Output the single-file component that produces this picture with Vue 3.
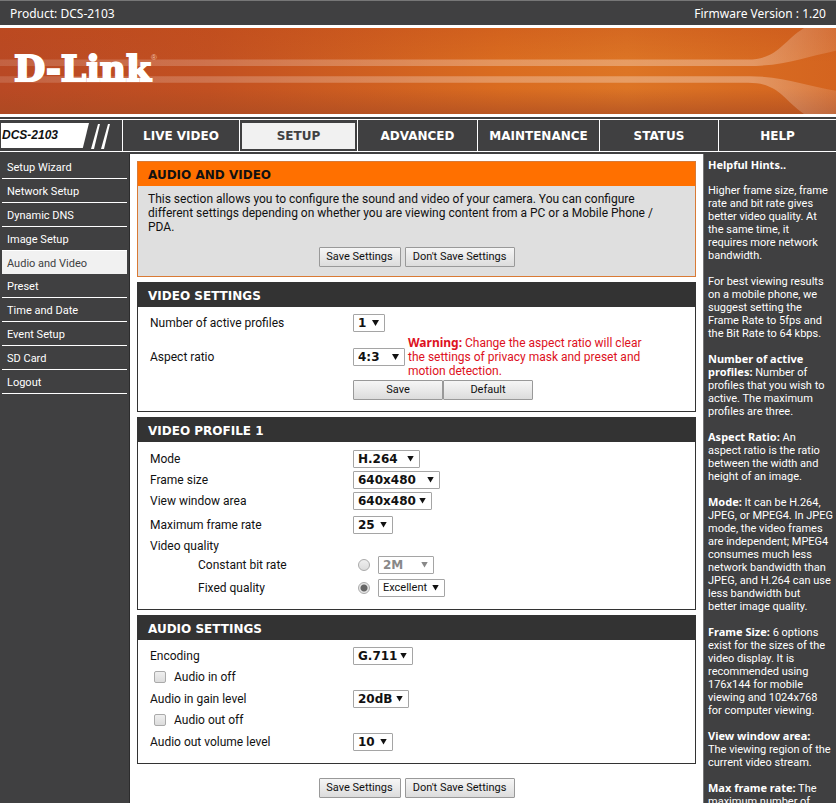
<template>
  <div class="page">
    <header>
      <div class="topbar">
        <span>Product: DCS-2103</span>
        <span>Firmware Version : 1.20</span>
      </div>
      <div class="banner">
        <svg class="banner-art" viewBox="0 0 836 86" preserveAspectRatio="none" aria-hidden="true">
          <defs>
            <linearGradient id="base" x1="0" x2="1" y1="0" y2="0">
              <stop offset="0" stop-color="#b94924" />
              <stop offset="0.25" stop-color="#c25021" />
              <stop offset="0.6" stop-color="#da6c20" />
              <stop offset="0.75" stop-color="#dd7525" />
              <stop offset="1" stop-color="#d4641f" />
            </linearGradient>
            <linearGradient id="shade" x1="0" x2="0" y1="0" y2="1">
              <stop offset="0" stop-color="#c04a18" stop-opacity="0.3" />
              <stop offset="0.4" stop-color="#c04a18" stop-opacity="0" />
              <stop offset="0.7" stop-color="#a84a22" stop-opacity="0" />
              <stop offset="1" stop-color="#a84a22" stop-opacity="0.65" />
            </linearGradient>
            <linearGradient id="beam" gradientUnits="userSpaceOnUse" x1="0" x2="836" y1="0" y2="0">
              <stop offset="0" stop-color="#fff" stop-opacity="0.14" />
              <stop offset="0.6" stop-color="#fff" stop-opacity="0.28" />
              <stop offset="0.9" stop-color="#fff" stop-opacity="0.3" />
              <stop offset="1" stop-color="#fff" stop-opacity="0.12" />
            </linearGradient>
          </defs>
          <rect width="836" height="86" fill="url(#base)" />
          <rect width="836" height="86" fill="url(#shade)" />
          <path d="M0 31.5H748C778 31 782 14 804 0H836V22.7C805 29 785 38 748 38H0Z" fill="url(#beam)" />
          <path d="M0 48.3H748C785 48 805 58 836 62.7V86H804C782 70 778 54.8 748 54.8H0Z" fill="url(#beam)" />
        </svg>
        <div class="logo">D-Link<sup>®</sup></div>
      </div>
      <nav class="mainnav">
        <div class="model">
          <span class="model-name">DCS-2103</span>
          <svg width="20" height="26" viewBox="0 0 20 26" aria-hidden="true">
            <path d="M1 26L8 1H10L4 26ZM11 26L18 1H20L14 26Z" fill="#fff" />
          </svg>
        </div>
        <a
          v-for="tab in tabs"
          :key="tab"
          href="#"
          class="tab"
          :class="{ active: tab === 'SETUP' }"
        ><span>{{ tab }}</span></a>
      </nav>
    </header>

    <div class="body">
      <nav class="sidebar">
        <a
          v-for="item in menu"
          :key="item"
          href="#"
          :class="{ active: item === 'Audio and Video' }"
        >{{ item }}</a>
      </nav>

      <main>
        <section class="box intro">
          <h1>AUDIO AND VIDEO</h1>
          <p>
            This section allows you to configure the sound and video of your camera. You can configure
            different settings depending on whether you are viewing content from a PC or a Mobile Phone / PDA.
          </p>
          <div class="actions">
            <button type="button">Save Settings</button>
            <button type="button" class="wide">Don't Save Settings</button>
          </div>
        </section>

        <section class="box">
          <h2>VIDEO SETTINGS</h2>
          <div class="row tall">
            <label for="profiles">Number of active profiles</label>
            <span class="select w32"><select id="profiles"><option>1</option></select></span>
          </div>
          <div class="row aspect">
            <label for="aspect">Aspect ratio</label>
            <span class="select w52"><select id="aspect"><option>4:3</option></select></span>
            <p class="warning">
              <b>Warning:</b> Change the aspect ratio will clear the settings of privacy mask and preset and motion detection.
            </p>
          </div>
          <div class="row pair">
            <button type="button">Save</button>
            <button type="button">Default</button>
          </div>
        </section>

        <section class="box">
          <h2>VIDEO PROFILE 1</h2>
          <div class="profile">
            <div class="row">
              <label for="mode">Mode</label>
              <span class="select w67"><select id="mode"><option>H.264</option></select></span>
            </div>
            <div class="row">
              <label for="frame-size">Frame size</label>
              <span class="select w87"><select id="frame-size"><option>640x480</option></select></span>
            </div>
            <div class="row">
              <label for="view-area">View window area</label>
              <span class="select w79"><select id="view-area"><option>640x480</option></select></span>
            </div>
            <div class="row rate">
              <label for="rate">Maximum frame rate</label>
              <span class="select w40"><select id="rate"><option>25</option></select></span>
            </div>
            <div class="row short">
              <span>Video quality</span>
            </div>
            <div class="row quality">
              <label for="cbr">Constant bit rate</label>
              <input id="cbr" v-model="quality" type="radio" name="quality" value="cbr">
              <span class="select w56 off">
                <select aria-label="Bit rate" disabled><option>2M</option></select>
              </span>
            </div>
            <div class="row quality">
              <label for="fixed">Fixed quality</label>
              <input id="fixed" v-model="quality" type="radio" name="quality" value="fixed">
              <span class="select w67 plain">
                <select aria-label="Quality"><option>Excellent</option></select>
              </span>
            </div>
          </div>
        </section>

        <section class="box">
          <h2>AUDIO SETTINGS</h2>
          <div class="audio">
            <div class="row">
              <label for="encoding">Encoding</label>
              <span class="select w60"><select id="encoding"><option>G.711</option></select></span>
            </div>
            <div class="row check">
              <input id="in-off" type="checkbox">
              <label for="in-off">Audio in off</label>
            </div>
            <div class="row">
              <label for="gain">Audio in gain level</label>
              <span class="select w56"><select id="gain"><option>20dB</option></select></span>
            </div>
            <div class="row check">
              <input id="out-off" type="checkbox">
              <label for="out-off">Audio out off</label>
            </div>
            <div class="row">
              <label for="volume">Audio out volume level</label>
              <span class="select w40"><select id="volume"><option>10</option></select></span>
            </div>
          </div>
        </section>

        <div class="actions bottom">
          <button type="button">Save Settings</button>
          <button type="button" class="wide">Don't Save Settings</button>
        </div>
      </main>

      <aside>
        <h3>Helpful Hints..</h3>
        <p v-for="hint in hints" :key="hint.text"><b v-if="hint.title">{{ hint.title }}</b>{{ hint.text }}</p>
      </aside>
    </div>
  </div>
</template>

<script setup>
import { ref } from 'vue'

const quality = ref('fixed')

const tabs = ['LIVE VIDEO', 'SETUP', 'ADVANCED', 'MAINTENANCE', 'STATUS', 'HELP']

const menu = [
  'Setup Wizard',
  'Network Setup',
  'Dynamic DNS',
  'Image Setup',
  'Audio and Video',
  'Preset',
  'Time and Date',
  'Event Setup',
  'SD Card',
  'Logout',
]

// line breaks are kept by white-space: pre-line
const hints = [
  { text: 'Higher frame size, frame\nrate and bit rate gives\nbetter video quality. At\nthe same time, it\nrequires more network\nbandwidth.' },
  { text: 'For best viewing results\non a mobile phone, we\nsuggest setting the\nFrame Rate to 5fps and\nthe Bit Rate to 64 kbps.' },
  { title: 'Number of active\nprofiles:', text: ' Number of\nprofiles that you wish to\nactive. The maximum\nprofiles are three.' },
  { title: 'Aspect Ratio:', text: ' An\naspect ratio is the ratio\nbetween the width and\nheight of an image.' },
  { title: 'Mode:', text: ' It can be H.264,\nJPEG, or MPEG4. In JPEG\nmode, the video frames\nare independent; MPEG4\nconsumes much less\nnetwork bandwidth than\nJPEG, and H.264 can use\nless bandwidth but\nbetter image quality.' },
  { title: 'Frame Size:', text: ' 6 options\nexist for the sizes of the\nvideo display. It is\nrecommended using\n176x144 for mobile\nviewing and 1024x768\nfor computer viewing.' },
  { title: 'View window area:', text: '\nThe viewing region of the\ncurrent video stream.' },
  { title: 'Max frame rate:', text: ' The\nmaximum number of' },
]
</script>

<style>
body {
  margin: 0;
  background: #fff;
}
</style>

<style scoped>
* {
  box-sizing: border-box;
}

.page {
  display: flex;
  flex-direction: column;
  height: 100vh;
  overflow: hidden;
  font-family: Tahoma, Roboto, sans-serif;
  font-size: 12px;
  line-height: 14px;
  color: #111;
}

.topbar {
  display: flex;
  align-items: center;
  justify-content: space-between;
  height: 25px;
  padding: 2px 10px 0;
  border-top: 1px solid #777;
  background: #404041;
  font-family: Tahoma, "Noto Sans", sans-serif;
  color: #fff;
}

.banner {
  position: relative;
  height: 86px;
  margin: 3px 0;
}

.banner-art {
  display: block;
  width: 100%;
  height: 100%;
}

.logo {
  position: absolute;
  top: 20px;
  left: 14px;
  font-family: "DejaVu Serif", serif;
  font-size: 36px;
  font-weight: bold;
  line-height: 40px;
  color: #fff;
  -webkit-text-stroke: 2px #fff;
}

.logo sup {
  position: absolute;
  top: 0;
  left: 100%;
  font-family: "Liberation Sans", sans-serif;
  font-size: 8px;
  font-weight: normal;
  line-height: 20px;
  color: #f0c0a8;
  -webkit-text-stroke: 0;
}

.mainnav {
  display: grid;
  grid-template-columns: 122fr 117fr 118fr 120fr 122fr 119fr 118fr;
  height: 37px;
  border-top: 2px solid #404041;
  border-bottom: 2px solid #404041;
  background: #404041;
  box-shadow: inset 0 1px #fff, inset 0 -1px #fff;
}

.model {
  display: flex;
  align-items: center;
  gap: 1px;
  padding-left: 1px;
}

.model-name {
  width: 88px;
  height: 25px;
  padding-left: 1px;
  background: #fff;
  clip-path: polygon(0 0, 100% 0, 93% 100%, 0 100%);
  font-family: "Liberation Sans", Arial, sans-serif;
  font-style: italic;
  font-weight: bold;
  line-height: 24px;
  color: #111;
}

.tab {
  display: flex;
  padding: 4px 2px 3px;
  border-left: 1px solid #fff;
  font-family: "DejaVu Sans", Verdana, sans-serif;
  font-weight: bold;
  color: #fff;
  text-decoration: none;
}

.tab span {
  flex: 1;
  line-height: 26px;
  text-align: center;
}

.tab.active span {
  background: #f1f1f1;
  color: #404041;
}

.body {
  display: grid;
  grid-template-columns: 130px 1fr 133px;
  flex: 1;
  min-height: 0;
}

.sidebar {
  padding: 1px 2px 0;
  border-right: 1px solid #2c2c2d;
  background: #404041;
}

.sidebar a {
  display: block;
  height: 24px;
  padding-left: 5px;
  border-bottom: 1px solid #fff;
  font-size: 11px;
  line-height: 26px;
  color: #fff;
  text-decoration: none;
}

.sidebar a.active {
  height: 23px;
  border-bottom: 0;
  background: #f1f1f1;
  color: #404041;
}

main {
  padding: 7px;
}

.box {
  margin-bottom: 5px;
  border: 1px solid #333;
}

.box h1,
.box h2 {
  height: 24px;
  margin: 0;
  padding-left: 10px;
  background: #333;
  font-family: "DejaVu Sans", Verdana, sans-serif;
  font-size: 12px;
  line-height: 26px;
  color: #fff;
}

.intro {
  border-color: #d97a35;
  background: #dfdfdf;
}

.box h1 {
  background: #ff7000;
  color: #111;
}

.intro p {
  max-width: 520px;
  margin: 6px 10px 13px;
}

.actions {
  display: flex;
  justify-content: center;
  gap: 4px;
  padding-bottom: 9px;
}

.actions.bottom {
  padding-top: 9px;
}

button {
  width: 82px;
  height: 20px;
  padding: 0;
  border: 1px solid #999;
  border-radius: 1px;
  background: linear-gradient(#f6f6f6, #dcdcdc);
  font-family: inherit;
  font-size: 11px;
  line-height: 18px;
  color: #111;
}

button.wide {
  width: 110px;
}

.row {
  display: flex;
  align-items: center;
  height: 21px;
  padding-left: 12px;
}

.row label {
  flex: none;
  width: 203px;
}

.tall {
  height: 32px;
}

.aspect {
  height: 42px;
  margin-top: -3px;
}

.warning {
  width: 242px;
  margin: 0 0 0 3px;
  color: #dd1122;
}

.warning b,
aside h3,
aside b {
  font-family: Tahoma, "Noto Sans", sans-serif;
}

/* keeps the bold face from stretching its line */
.warning b,
aside b {
  line-height: 9px;
}

.pair {
  height: 33px;
  padding: 0 0 10px 215px;
}

.pair button {
  width: 90px;
}

.profile {
  padding: 6px 0 10px;
}

.rate {
  height: 27px;
}

.short {
  height: 15px;
}

.quality {
  height: 23px;
  padding-left: 60px;
}

.quality label {
  width: 160px;
}

.audio {
  padding: 5px 0 11px;
}

.check {
  height: 22px;
  padding-left: 16px;
}

.select {
  position: relative;
  display: block;
  height: 18px;
}

.select::after {
  content: "";
  position: absolute;
  top: 6px;
  right: 6px;
  width: 7px;
  height: 6px;
  background: #111;
  clip-path: polygon(0 0, 100% 0, 50% 100%);
  pointer-events: none;
}

.select select {
  display: block;
  width: 100%;
  height: 18px;
  padding: 0 0 0 4px;
  appearance: none;
  border: 1px solid #a5a5a5;
  border-radius: 1px;
  background: #fff;
  font-family: "DejaVu Sans", Verdana, sans-serif;
  font-size: 12px;
  font-weight: bold;
  line-height: 16px;
  color: #111;
}

.select.plain select {
  font-family: inherit;
  font-size: 11px;
  font-weight: normal;
}

.select.off select {
  color: #888;
  opacity: 1;
}

.select.off::after {
  background: #888;
}

.w32 { width: 32px; }
.w40 { width: 40px; }
.w52 { width: 52px; }
.w56 { width: 56px; }
.w60 { width: 60px; }
.w67 { width: 67px; }
.w79 { width: 79px; }
.w87 { width: 87px; }

input {
  appearance: none;
  width: 12px;
  height: 12px;
  margin: 0 8px 0 0;
  border: 1px solid #aaa;
  border-radius: 2px;
  background: linear-gradient(#efefef, #dcdcdc);
}

input[type="radio"] {
  border-radius: 50%;
}

input[type="radio"]:checked {
  background: radial-gradient(circle, #666 0 3px, #e6e6e6 4px);
}

aside {
  padding: 4px 0 0 4px;
  border-left: 1px solid #777;
  background: #404041;
  font-size: 11px;
  line-height: 13px;
  color: #fff;
}

aside h3,
aside p {
  margin: 0 0 13px;
  font-size: 11px;
  white-space: pre-line;
}
</style>
